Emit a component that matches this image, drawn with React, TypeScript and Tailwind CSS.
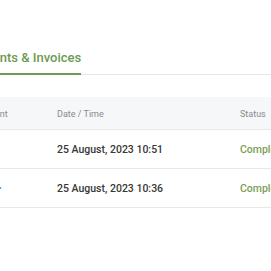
import React from "react";

const rows = [
  { date: "25 August, 2023 10:51", status: "Completed", link: false },
  { date: "25 August, 2023 10:36", status: "Completed", link: true },
];

export default function App() {
  return (
    <div className="w-[271px] h-[271px] overflow-hidden bg-white" style={{ fontFamily: "Roboto, 'Noto Sans', sans-serif" }}>
      <div className="ml-[-60px] w-[420px] pt-[46px]">
        <div className="flex border-b border-[#e6e6e6]">
          <div className="pb-[7px] pt-[4px] border-b-2 border-[#6c9b52] mb-[-1px] text-[13px] leading-[16px] font-medium text-[#6c9b52]">
            <span className="pl-[20px]">Payments &amp; Invoices</span>
          </div>
        </div>
        <div className="mt-[22px]">
          <div className="flex items-center h-[33px] pt-[4px] bg-[#f6f7f9] border-b border-[#e8e8e8] text-[9px] text-[#8a8a8a]">
            <div className="w-[117px] pl-[36px]">Amount</div>
            <div className="w-[183px]">Date / Time</div>
            <div>Status</div>
          </div>
          {rows.map((r, i) => (
            <div key={i} className="flex items-center h-[39px] pt-[1px] border-b border-[#e8e8e8] text-[10.5px]">
              <div className="w-[117px] pl-[20px]">
                {r.link ? <span className="text-[#3b82f6] pl-[38px]">•</span> : null}
              </div>
              <div className="w-[183px] font-medium text-[#383838]">{r.date}</div>
              <div className="font-medium text-[#7a9e55]">{r.status}</div>
            </div>
          ))}
        </div>
      </div>
    </div>
  );
}
